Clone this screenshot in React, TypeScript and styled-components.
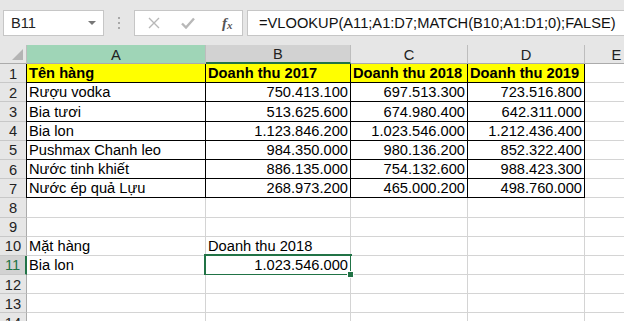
import styled, { createGlobalStyle } from "styled-components";

const GlobalStyle = createGlobalStyle`
  body {
    margin: 0;
    background: #fff;
    font-family: "Liberation Sans", Arial, sans-serif;
  }
`;

type Row = { cells: string[]; bold?: boolean; fill?: boolean; boxed?: boolean };

const rows: Row[] = [
  { cells: ["Tên hàng", "Doanh thu 2017", "Doanh thu 2018", "Doanh thu 2019"], bold: true, fill: true, boxed: true },
  { cells: ["Rượu vodka", "750.413.100", "697.513.300", "723.516.800"], boxed: true },
  { cells: ["Bia tươi", "513.625.600", "674.980.400", "642.311.000"], boxed: true },
  { cells: ["Bia lon", "1.123.846.200", "1.023.546.000", "1.212.436.400"], boxed: true },
  { cells: ["Pushmax Chanh leo", "984.350.000", "980.136.200", "852.322.400"], boxed: true },
  { cells: ["Nước tinh khiết", "886.135.000", "754.132.600", "988.423.300"], boxed: true },
  { cells: ["Nước ép quả Lựu", "268.973.200", "465.000.200", "498.760.000"], boxed: true },
  { cells: [] },
  { cells: [] },
  { cells: ["Mặt hàng", "Doanh thu 2018"] },
  { cells: ["Bia lon", "1.023.546.000"] },
  { cells: [] },
  { cells: [] },
  { cells: [] },
];

const columns = ["A", "B", "C", "D", "E"];
const isNumber = (s: string) => /^[\d.]+$/.test(s);

export default function App() {
  return (
    <>
      <GlobalStyle />
      <Window>
        <FormulaBar>
          <NameBox>
            <span>B11</span>
            <DropArrow />
          </NameBox>
          <Grip>
            <i />
            <i />
            <i />
          </Grip>
          <ButtonBox>
            <IconSlot>
              <svg width="12" height="12" viewBox="0 0 12 12">
                <path d="M1 1L11 11M11 1L1 11" stroke="#b8b8b8" strokeWidth="1.4" fill="none" />
              </svg>
            </IconSlot>
            <IconSlot>
              <svg width="14" height="12" viewBox="0 0 14 12">
                <path d="M1 6.5L5 10.5L13 1.5" stroke="#b8b8b8" strokeWidth="2.4" fill="none" />
              </svg>
            </IconSlot>
            <FxLabel>
              f<sub>x</sub>
            </FxLabel>
          </ButtonBox>
          <FormulaInput>=VLOOKUP(A11;A1:D7;MATCH(B10;A1:D1;0);FALSE)</FormulaInput>
        </FormulaBar>

        <Sheet>
          <Corner>
            <svg width="11" height="11" viewBox="0 0 11 11">
              <path d="M11 0V11H0Z" fill="#b4b4b4" />
            </svg>
          </Corner>
          {columns.map((c) => (
            <ColHeader key={c} $state={c === "A" ? "green" : c === "B" ? "active" : undefined}>
              {c}
            </ColHeader>
          ))}

          {rows.map((row, r) => (
            <RowGroup key={r}>
              <RowHeader $active={r === 10}>{r + 1}</RowHeader>
              {columns.map((c, ci) => {
                const text = row.cells[ci] ?? "";
                const inTable = !!row.boxed && ci < 4;
                return (
                  <Cell
                    key={c}
                    $boxed={inTable}
                    $leftEdge={inTable && ci === 0}
                    $fill={!!row.fill && ci < 4}
                    $bold={row.bold}
                    $right={isNumber(text)}
                    $selected={r === 10 && ci === 1}
                  >
                    {text}
                  </Cell>
                );
              })}
            </RowGroup>
          ))}
        </Sheet>
      </Window>
    </>
  );
}

const Window = styled.div`
  width: 624px;
  height: 321px;
  overflow: hidden;
  background: #fff;
`;

const FormulaBar = styled.div`
  display: flex;
  align-items: flex-start;
  height: 45px;
  box-sizing: border-box;
  padding: 10px 0 0 3px;
  background: #e6e6e6;
`;

const NameBox = styled.div`
  display: flex;
  align-items: center;
  justify-content: space-between;
  width: 101px;
  height: 26px;
  box-sizing: border-box;
  padding: 0 7px 0 7px;
  background: #fff;
  border: 1px solid #c6c6c6;
  font-size: 14.67px;
  color: #222;
`;

const DropArrow = styled.span`
  width: 0;
  height: 0;
  border-left: 4px solid transparent;
  border-right: 4px solid transparent;
  border-top: 4px solid #777;
`;

const Grip = styled.div`
  display: flex;
  flex-direction: column;
  gap: 3px;
  margin: 7px 14px 0 14px;

  i {
    display: block;
    width: 2px;
    height: 2px;
    background: #a8a8a8;
  }
`;

const ButtonBox = styled.div`
  display: flex;
  align-items: center;
  width: 109px;
  height: 26px;
  box-sizing: border-box;
  padding-left: 12px;
  background: #fff;
  border: 1px solid #c6c6c6;
`;

const IconSlot = styled.span`
  display: flex;
  align-items: center;
  justify-content: center;
  width: 36px;
  margin-left: -6px;
  &:first-child {
    margin-left: 0;
    width: 14px;
    margin-right: 15px;
  }
`;

const FxLabel = styled.span`
  margin-left: 16px;
  font-family: "Liberation Serif", "Times New Roman", serif;
  font-style: italic;
  font-weight: bold;
  font-size: 15px;
  color: #555;

  sub {
    font-size: 11px;
    vertical-align: -1px;
  }
`;

const FormulaInput = styled.div`
  flex: 1;
  height: 26px;
  margin-left: 4px;
  box-sizing: border-box;
  padding-left: 11px;
  display: flex;
  align-items: center;
  background: #fff;
  border: 1px solid #c6c6c6;
  border-right: none;
  font-size: 14.67px;
  color: #111;
  white-space: nowrap;
`;

const Sheet = styled.div`
  display: grid;
  grid-template-columns: 27px 179px 145px 117px 117px 64px;
  grid-template-rows: 19px;
  grid-auto-rows: 19.2px;
  font-size: 14.67px;
`;

const RowGroup = styled.div`
  display: contents;
`;

const Corner = styled.div`
  display: flex;
  align-items: flex-end;
  justify-content: flex-end;
  padding: 0 3px 3px 0;
  box-sizing: border-box;
  background: #e6e6e6;
  border-right: 1px solid #bdbdbd;
  border-bottom: 1px solid #ababab;
`;

const ColHeader = styled.div<{ $state?: "green" | "active" }>`
  display: flex;
  align-items: center;
  justify-content: center;
  box-sizing: border-box;
  background: ${(p) => (p.$state === "green" ? "#9fd5b7" : p.$state === "active" ? "#d2d2d2" : "#e6e6e6")};
  border-right: 1px solid #bdbdbd;
  border-bottom: ${(p) => (p.$state === "active" ? "2px solid #217346" : "1px solid #ababab")};
  color: #222;
  padding-top: 1px;
`;

const RowHeader = styled.div<{ $active?: boolean }>`
  display: flex;
  align-items: center;
  justify-content: center;
  box-sizing: border-box;
  background: ${(p) => (p.$active ? "#d2d2d2" : "#e6e6e6")};
  border-right: ${(p) => (p.$active ? "2px solid #217346" : "1px solid #ababab")};
  border-bottom: 1px solid #c8c8c8;
  color: ${(p) => (p.$active ? "#217346" : "#222")};
  padding-top: 1px;
`;

const Cell = styled.div<{
  $boxed?: boolean;
  $leftEdge?: boolean;
  $fill?: boolean;
  $bold?: boolean;
  $right?: boolean;
  $selected?: boolean;
}>`
  position: relative;
  display: flex;
  align-items: flex-end;
  justify-content: ${(p) => (p.$right ? "flex-end" : "flex-start")};
  box-sizing: border-box;
  padding: 0 2px 0 2px;
  background: ${(p) => (p.$fill ? "#ffff00" : "#fff")};
  border-right: 1px solid ${(p) => (p.$boxed ? "#000" : "#d4d4d4")};
  border-bottom: 1px solid ${(p) => (p.$boxed ? "#000" : "#d4d4d4")};
  box-shadow: ${(p) => (p.$leftEdge ? "-1px 0 0 #000" : "none")};
  font-weight: ${(p) => (p.$bold ? "bold" : "normal")};
  color: #000;
  line-height: 17px;
  white-space: nowrap;

  ${(p) =>
    p.$selected &&
    `
    &::after {
      content: "";
      position: absolute;
      top: -2px;
      left: -2px;
      right: -2px;
      bottom: -2px;
      border: 2px solid #217346;
      pointer-events: none;
    }
    &::before {
      content: "";
      position: absolute;
      right: -4px;
      bottom: -4px;
      width: 5px;
      height: 5px;
      background: #217346;
      border: 1px solid #fff;
      z-index: 1;
    }
  `}
`;
